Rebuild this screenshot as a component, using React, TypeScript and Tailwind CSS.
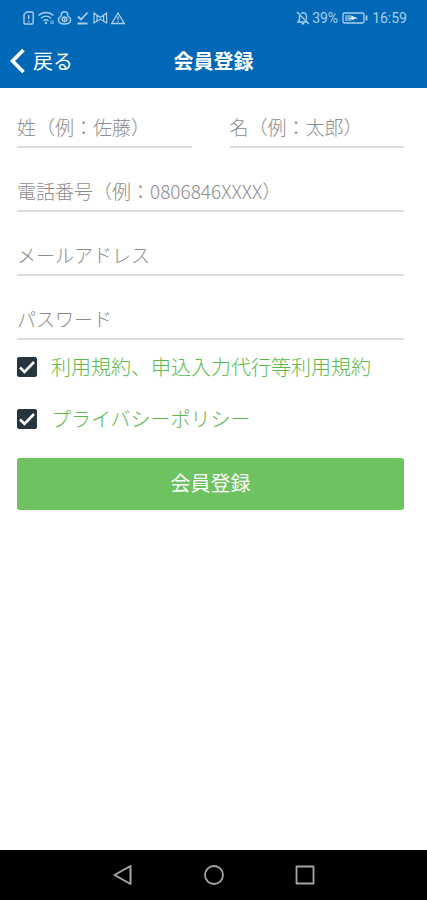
import { useState } from 'react';
import { clsx } from 'clsx';

interface FieldProps {
  id: string;
  label: string;
  type?: string;
}

// The label sits in the empty input and hides once something is typed
function Field({ id, label, type = 'text' }: FieldProps) {
  return (
    <div className="grid w-full min-w-0 text-[19px] font-light">
      <input
        id={id}
        name={id}
        type={type}
        placeholder=" "
        className="peer col-start-1 row-start-1 w-full min-w-0 h-12 pt-2 bg-transparent border-b-2 border-[#dcdcdc] text-gray-800 outline-none focus:border-[#0068b7]"
      />
      <label
        htmlFor={id}
        className="invisible peer-placeholder-shown:visible col-start-1 row-start-1 self-center pt-1.5 leading-7 whitespace-nowrap text-[#8c8c8c] pointer-events-none"
      >
        {label}
      </label>
    </div>
  );
}

interface AgreementProps {
  id: string;
  text: string;
}

function Agreement({ id, text }: AgreementProps) {
  const [checked, setChecked] = useState(true);

  return (
    <div className="flex items-center gap-3.5 h-8">
      <span className="grid size-5 shrink-0">
        <input
          id={id}
          type="checkbox"
          checked={checked}
          onChange={(e) => setChecked(e.target.checked)}
          className="col-start-1 row-start-1 size-5 appearance-none rounded-xs border border-[#263640] checked:bg-[#263640]"
        />
        <svg
          viewBox="0 0 20 20"
          aria-hidden="true"
          className={clsx('col-start-1 row-start-1 size-5 pointer-events-none', !checked && 'invisible')}
        >
          <path d="M3 10.5l4.500 4.500L17 5" fill="none" stroke="#fff" strokeWidth="2.600" />
        </svg>
      </span>
      <label htmlFor={id} className="text-xl leading-8 font-light text-[#5cb84c]">{text}</label>
    </div>
  );
}

function StatusBar() {
  return (
    <div className="flex items-center justify-between h-9 pl-[22px] pr-5 text-[#a9cdec]">
      <svg viewBox="0 0 104 16" className="w-[104px] h-4" fill="none" stroke="currentColor" strokeWidth="1.4" aria-hidden="true">
        {/* SIM */}
        <path d="M4.500 2H10a1.200 1.200 0 0 1 1.200 1.200v9.600A1.200 1.200 0 0 1 10 14H3.200A1.200 1.200 0 0 1 2 12.800V4.500zM6.600 5v4.200M6.600 10.800v1.400" />
        {/* Wi-Fi */}
        <path d="M16.500 5.500c4.300-4 10.700-4 15 0M19 8.300c3-2.600 7-2.600 10 0M21.500 10.800c1.600-1.300 3.400-1.300 5 0" />
        <circle cx="24" cy="13" r="1.200" fill="currentColor" stroke="none" />
        <path d="M29 10.500v3.500M31 10.500v3.500" strokeWidth="1" />
        {/* Lock */}
        <path d="M39.200 6V5a3.300 3.300 0 0 1 6.600 0v1c1.700 1 2.700 2.300 2.700 4 0 2.700-2 4-6 4s-6-1.300-6-4c0-1.700 1-3 2.700-4z" />
        <circle cx="42.500" cy="9.300" r="2.300" />
        <path d="M42.500 8.300v2.500" />
        {/* Download done */}
        <path d="M56 6.500l3 3 6.500-7M55.500 13.500h10" strokeWidth="1.800" />
        {/* Mail */}
        <path d="M72 13V3l6.300 4.500L84.600 3v10l-6.300-3.800zM75 5.500v5.500M81.600 5.500v5.500" strokeWidth="1.200" />
        {/* Warning */}
        <path d="M96 3l6.300 10.500H89.700zM96 6.500v3.200M96 10.800v1.300" />
      </svg>

      <div className="flex items-center text-sm font-['Roboto',sans-serif]">
        <svg viewBox="0 0 14 16" className="w-3.5 h-4 mr-0.5" fill="none" stroke="currentColor" strokeWidth="1.4" aria-hidden="true">
          <path d="M1 2l12 12M3.500 5.500V10L2 12h8.500M5 3.500c3-2 5.500 0 5.500 3v3M5.700 13.800h2.600" />
        </svg>
        <span>39%</span>
        <svg viewBox="0 0 26 14" className="w-[26px] h-3.5 mx-1" fill="none" stroke="currentColor" strokeWidth="1.300" aria-hidden="true">
          <rect x="1" y="2" width="21" height="10" rx="1.500" />
          <path d="M24.500 4.500v5" strokeWidth="1.800" />
          <path d="M3 4h6l2 1.500 5 1.500-5 1-2 2H3z" fill="currentColor" fillOpacity="0.6" stroke="none" />
          <path d="M6 7h3.500V5l6.500 2.500h-4V9z" fill="#fff" stroke="none" />
        </svg>
        <span>16:59</span>
      </div>
    </div>
  );
}

function NavigationBar() {
  return (
    <nav className="grid grid-cols-[1fr_20px_71px_20px_71px_20px_1fr] items-center h-[50px] bg-black text-[#a6a6a6]">
      <button type="button" aria-label="Back" className="col-start-2">
        <svg viewBox="0 0 20 20" className="size-5" fill="none" stroke="currentColor" strokeWidth="2" strokeLinejoin="round">
          <path d="M1.500 10L17.500 1v18z" />
        </svg>
      </button>
      <button type="button" aria-label="Home" className="col-start-4">
        <svg viewBox="0 0 20 20" className="size-5" fill="none" stroke="currentColor" strokeWidth="1.800">
          <circle cx="10" cy="10" r="9" />
        </svg>
      </button>
      <button type="button" aria-label="Recent apps" className="col-start-6">
        <svg viewBox="0 0 20 20" className="size-5" fill="none" stroke="currentColor" strokeWidth="1.800" strokeLinejoin="round">
          <rect x="1.500" y="1.500" width="17" height="17" />
        </svg>
      </button>
    </nav>
  );
}

export default function App() {
  return (
    <div className="flex flex-col min-h-screen bg-white font-['Noto_Sans_CJK_JP',sans-serif]">
      <header className="bg-[#0068b7]">
        <StatusBar />
        <div className="grid grid-cols-[1fr_auto_1fr] items-center h-[52px] pb-0.5 px-2.5 text-white">
          <button type="button" className="flex items-center gap-2 justify-self-start text-xl">
            <svg viewBox="0 0 15 26" className="w-[15px] h-[26px]" fill="none" stroke="currentColor" strokeWidth="3.600" aria-hidden="true">
              <path d="M13.500 2L2.500 13l11 11" />
            </svg>
            戻る
          </button>
          <h1 className="text-xl font-bold">会員登録</h1>
        </div>
      </header>

      <main className="flex-1 pt-3 pl-[17px] pr-[23px]">
        <form onSubmit={(e) => e.preventDefault()}>
          <div className="flex flex-col gap-4">
            <div className="flex gap-[38px]">
              <Field id="last-name" label="姓（例：佐藤）" />
              <Field id="first-name" label="名（例：太郎）" />
            </div>
            <Field id="tel" type="tel" label="電話番号（例：0806846XXXX）" />
            <Field id="email" type="email" label="メールアドレス" />
            <Field id="password" type="password" label="パスワード" />
          </div>

          <div className="flex flex-col gap-5 pt-[11px] pb-[23px]">
            <Agreement id="terms" text="利用規約、申込入力代行等利用規約" />
            <Agreement id="privacy" text="プライバシーポリシー" />
          </div>

          <button type="submit" className="block w-full h-[52px] pb-0.5 rounded-[3px] bg-[#6ec25f] text-xl text-white">
            会員登録
          </button>
        </form>
      </main>

      <NavigationBar />
    </div>
  );
}
